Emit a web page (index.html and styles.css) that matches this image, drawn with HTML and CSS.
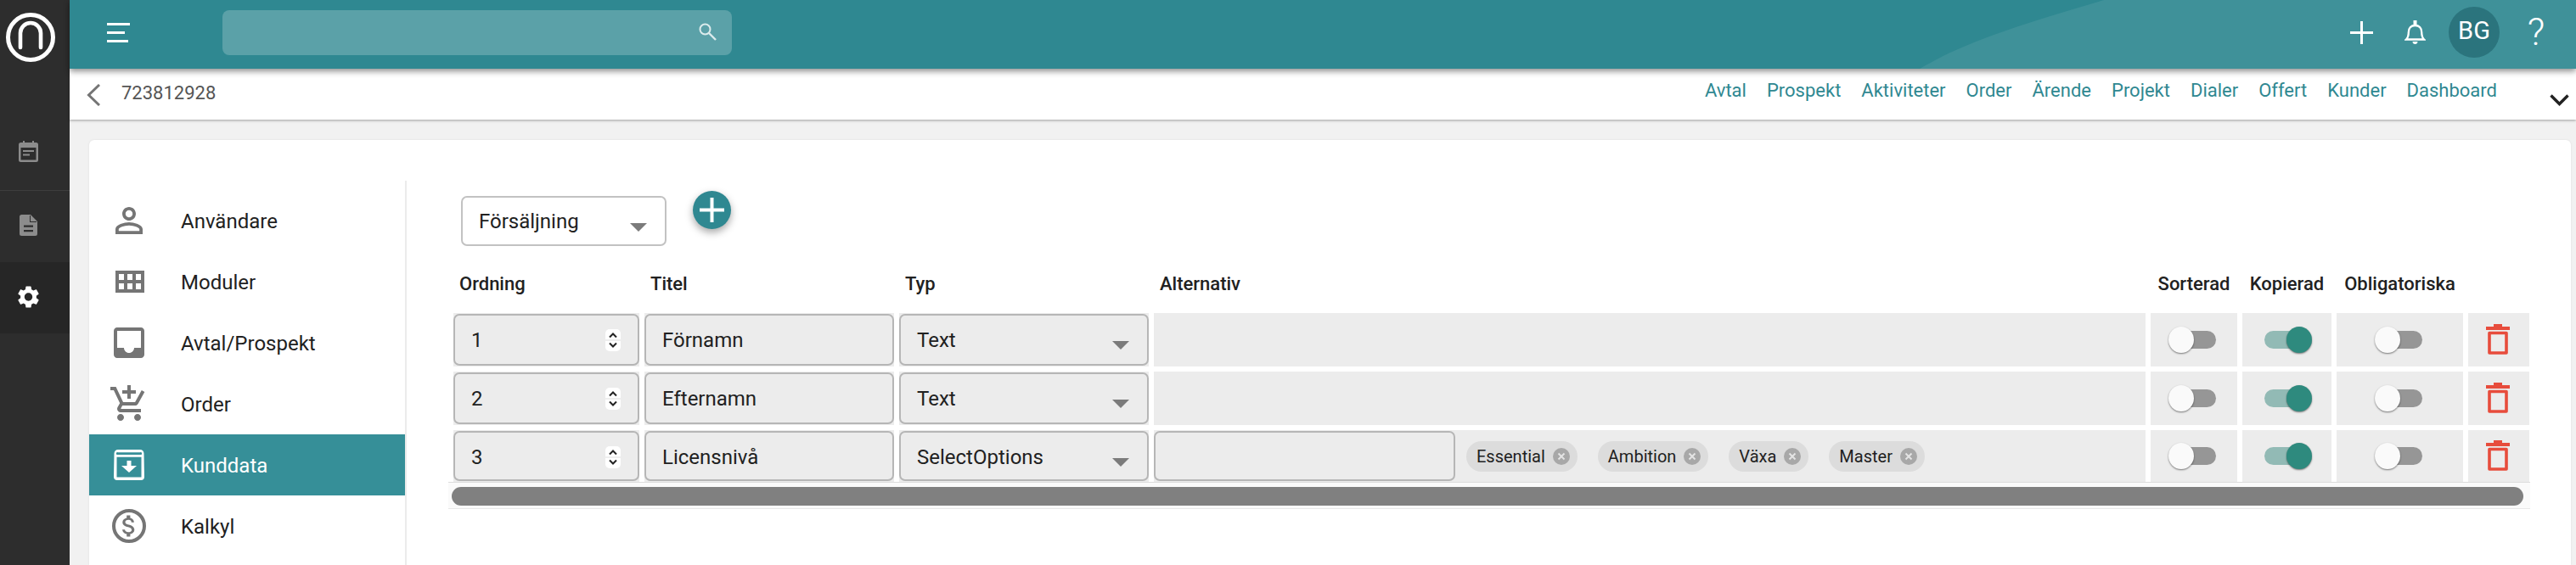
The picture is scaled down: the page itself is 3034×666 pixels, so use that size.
FILE: index.html
```html
<!DOCTYPE html>
<html lang="sv">
<head>
<meta charset="utf-8">
<title>Kunddata</title>
<link rel="stylesheet" href="styles.css">
</head>
<body>
<aside class="rail">
  <div class="rail-logo">
    <svg class="logo" viewBox="0 0 58 58"><circle cx="29" cy="29" r="26.5" fill="none" stroke="#fff" stroke-width="5"/><path d="M17 41V24a12 12 0 0 1 24 0v17" fill="none" stroke="#fff" stroke-width="4.6" stroke-linecap="round"/></svg>
  </div>
  <div class="rail-item rail-line">
    <svg class="rail-cal" viewBox="0 0 23 25"><path fill="#8c8c8c" fill-rule="evenodd" d="M5 0h2v2h9V0h2v2h2.500A2.500 2.500 0 0 1 23 4.500v18a2.500 2.500 0 0 1-2.500 2.500h-18A2.500 2.500 0 0 1 0 22.500v-18A2.500 2.500 0 0 1 2.500 2H5zM2.500 8v14.500h18V8zM5 11h13v2H5zm0 4.500h8v2H5z"/></svg>
  </div>
  <div class="rail-item">
    <svg class="rail-doc" viewBox="0 0 21 25"><path fill="#8c8c8c" fill-rule="evenodd" d="M2.500 0H13l8 8v14.500a2.500 2.500 0 0 1-2.500 2.500h-16A2.500 2.500 0 0 1 0 22.500v-20A2.500 2.500 0 0 1 2.500 0zM5 12.500v2.200h11v-2.200zM5 18v2.200h11V18z"/><path fill="#2d2d2d" d="M12 1v8h8v-1h-7V1z"/></svg>
  </div>
  <div class="rail-item rail-active">
    <svg class="rail-gear" viewBox="2.400 2 19.200 20"><path fill="#fff" d="M19.140 12.940c.04-.3.06-.61.06-.94 0-.32-.02-.64-.07-.94l2.030-1.580c.18-.14.23-.41.120-.61l-1.920-3.320c-.12-.22-.37-.29-.59-.22l-2.390.96c-.5-.38-1.030-.7-1.620-.94l-.36-2.540c-.04-.24-.24-.41-.48-.41h-3.840c-.24 0-.43.17-.47.41l-.36 2.540c-.59.24-1.130.57-1.620.94l-2.390-.96c-.22-.08-.47 0-.59.22L2.740 8.870c-.12.21-.08.47.12.61l2.030 1.580c-.05.3-.09.63-.09.94s.02.64.07.94l-2.030 1.580c-.18.14-.23.41-.12.61l1.920 3.320c.12.22.37.29.59.22l2.390-.96c.5.38 1.030.7 1.620.94l.36 2.54c.05.24.24.41.48.41h3.840c.24 0 .44-.17.47-.41l.36-2.540c.59-.24 1.130-.56 1.620-.94l2.390.96c.22.08.47 0 .59-.22l1.920-3.320c.12-.22.07-.47-.12-.61l-2.010-1.580zM12 15.600c-1.980 0-3.600-1.620-3.600-3.600s1.620-3.600 3.600-3.600 3.600 1.620 3.600 3.600-1.620 3.600-3.600 3.600z"/></svg>
  </div>
</aside>
<div class="main">
  <header class="topbar">
    <svg class="top-curve" viewBox="0 0 773 81"><path fill="#3f9199" d="M217 0C130 26 55 48 0 81H773V0z"/></svg>
    <svg class="burger" viewBox="0 0 27 23"><path fill="#fff" d="M0 0h27v3H0zM0 10h21v3H0zM0 20h25v3H0z"/></svg>
    <div class="search">
      <svg class="search-icon" viewBox="0 0 21 21"><circle cx="7.500" cy="7.500" r="6" fill="none" stroke="#dcebec" stroke-width="2"/><path d="M12 12l8 8" stroke="#dcebec" stroke-width="2.400"/></svg>
    </div>
    <div class="top-actions">
      <svg class="top-plus" viewBox="0 0 27 27"><path fill="#fff" d="M12 0h3v12h12v3H15v12h-3V15H0v-3h12z"/></svg>
      <svg class="top-bell" viewBox="0 0 25 28"><path fill="none" stroke="#fff" stroke-width="2.300" d="M2 22.500c2-2 2.800-4 2.800-8.500 0-5 3-8 7.700-8s7.700 3 7.700 8c0 4.500.8 6.500 2.800 8.500z"/><path fill="#fff" d="M10.500 0h4v5h-4zM9.500 25h6c0 1.800-1.300 3-3 3s-3-1.200-3-3z"/></svg>
      <div class="avatar">BG</div>
      <div class="help">?</div>
    </div>
  </header>
  <nav class="subbar">
    <svg class="back" viewBox="0 0 16 26"><path d="M15 1L2.500 13 15 25" fill="none" stroke="#757575" stroke-width="3"/></svg>
    <span class="sub-id">723812928</span>
    <div class="sub-links">
      <a>Avtal</a><a>Prospekt</a><a>Aktiviteter</a><a>Order</a><a>Ärende</a><a>Projekt</a><a>Dialer</a><a>Offert</a><a>Kunder</a><a>Dashboard</a>
    </div>
    <svg class="sub-more" viewBox="0 0 23 14"><path d="M1.500 1.500l10 10 10-10" fill="none" stroke="#222" stroke-width="3.400"/></svg>
  </nav>
  <section class="card">
    <ul class="menu">
      <li class="menu-item">
        <span class="menu-icon"><svg class="i-person" viewBox="4 4 16 16"><path fill="#757575" d="M12 5.900c1.160 0 2.100.94 2.100 2.100s-.94 2.100-2.100 2.100S9.900 9.160 9.900 8s.94-2.100 2.100-2.100m0 9c2.970 0 6.100 1.460 6.100 2.100v1.100H5.900V17c0-.64 3.130-2.100 6.100-2.100M12 4C9.790 4 8 5.790 8 8s1.790 4 4 4 4-1.790 4-4-1.790-4-4-4zm0 9c-2.670 0-8 1.340-8 4v3h16v-3c0-2.660-5.330-4-8-4z"/></svg></span>
        Användare
      </li>
      <li class="menu-item">
        <span class="menu-icon"><svg class="i-grid" viewBox="0 0 34 26"><path fill="#757575" fill-rule="evenodd" d="M0 0h34v26H0zM4 4v7h6V4zm10 0v7h6V4zm10 0v7h6V4zM4 15v7h6v-7zm10 0v7h6v-7zm10 0v7h6v-7z"/></svg></span>
        Moduler
      </li>
      <li class="menu-item">
        <span class="menu-icon"><svg class="i-inbox" viewBox="3 3 18 18"><path fill="#757575" d="M19 3H4.990c-1.110 0-1.980.89-1.980 2L3 19c0 1.100.88 2 1.990 2H19c1.100 0 2-.9 2-2V5c0-1.110-.9-2-2-2zm0 12h-4c0 1.660-1.350 3-3 3s-3-1.340-3-3H4.990V5H19v10z"/></svg></span>
        Avtal/Prospekt
      </li>
      <li class="menu-item">
        <span class="menu-icon"><svg class="i-cart" viewBox="1 1 20.500 21"><path fill="#757575" d="M11 9h2V6h3V4h-3V1h-2v3H8v2h3v3zm-4 9c-1.100 0-1.990.9-1.990 2S5.900 22 7 22s2-.9 2-2-.9-2-2-2zm10 0c-1.100 0-1.990.9-1.990 2s.89 2 1.990 2 2-.9 2-2-.9-2-2-2zm-9.830-3.250l.03-.12.9-1.630h7.450c.75 0 1.410-.41 1.750-1.030l3.860-7.010L19.420 4h-.01l-1.100 2-2.760 5H8.530l-.13-.27L6.160 6l-.95-2-.94-2H1v2h2l3.600 7.590-1.350 2.450c-.16.28-.25.61-.25.96 0 1.100.9 2 2 2h12v-2H7.420c-.13 0-.25-.11-.25-.25z"/></svg></span>
        Order
      </li>
      <li class="menu-item menu-active">
        <span class="menu-icon"><svg class="i-box" viewBox="0 0 36 36"><path fill="#fff" fill-rule="evenodd" d="M5 0h26a4.500 4.500 0 0 1 4.500 4.500L36 32a4 4 0 0 1-4 4H4a4 4 0 0 1-4-4L.5 4.500A4.500 4.500 0 0 1 5 0zM5 3.200h26a1.500 1.500 0 0 1 1.300 2.800H3.700A1.500 1.500 0 0 1 5 3.200zM3.500 8.800v23.700h29V8.800z"/><path fill="#fff" d="M15.500 13h5v6h6.500l-9 8-9-8h6.500z"/></svg></span>
        Kunddata
      </li>
      <li class="menu-item">
        <span class="menu-icon"><svg class="i-money" viewBox="0 0 40 40"><circle cx="20" cy="20" r="18" fill="none" stroke="#757575" stroke-width="4"/><path fill="#757575" transform="translate(3.200 3.200) scale(1.400)" d="M11.800 10.900c-2.270-.59-3-1.200-3-2.150 0-1.090 1.010-1.850 2.700-1.850 1.780 0 2.440.85 2.500 2.100h2.210c-.07-1.720-1.120-3.300-3.210-3.810V3h-3v2.160c-1.940.42-3.500 1.680-3.500 3.610 0 2.310 1.910 3.460 4.700 4.130 2.500.6 3 1.480 3 2.410 0 .69-.49 1.790-2.700 1.790-2.060 0-2.870-.92-2.980-2.100h-2.200c.12 2.190 1.760 3.420 3.680 3.830V21h3v-2.150c1.950-.37 3.500-1.500 3.500-3.550 0-2.840-2.430-3.810-4.700-4.400z"/></svg></span>
        Kalkyl
      </li>
    </ul>
    <div class="pane">
      <div class="pane-top">
        <div class="select">Försäljning<i class="caret"></i></div>
        <div class="fab"><svg viewBox="0 0 29 29"><path fill="#fff" d="M12.500 0h4v12.500H29v4H16.500V29h-4V16.500H0v-4h12.500z"/></svg></div>
      </div>
      <div class="grid">
        <div class="head">Ordning</div>
        <div class="head">Titel</div>
        <div class="head">Typ</div>
        <div class="head">Alternativ</div>
        <div class="head head-mid">Sorterad</div>
        <div class="head head-mid">Kopierad</div>
        <div class="head head-mid">Obligatoriska</div>
        <div class="head"></div>

        <div class="cell"><div class="field">1<svg class="spin" viewBox="0 0 18 26"><rect width="18" height="26" rx="5" fill="#fff"/><path d="M0 13h18" stroke="#ddd"/><path d="M5 9.500l4-4 4 4M5 16.500l4 4 4-4" fill="none" stroke="#222" stroke-width="2"/></svg></div></div>
        <div class="cell"><div class="field">Förnamn</div></div>
        <div class="cell"><div class="field">Text<i class="caret"></i></div></div>
        <div class="cell"></div>
        <div class="cell cell-off"><div class="toggle"><span class="track"></span><span class="thumb"></span></div></div>
        <div class="cell cell-on"><div class="toggle toggle-on"><span class="track"></span><span class="thumb"></span></div></div>
        <div class="cell cell-off"><div class="toggle"><span class="track"></span><span class="thumb"></span></div></div>
        <div class="cell cell-del"><svg class="trash" viewBox="0 0 28 36"><path fill="#e74c3c" d="M0 3h9V0h10v3h9v4H0z"/><path fill="none" stroke="#e74c3c" stroke-width="3.600" stroke-linejoin="round" d="M4 10.500h20V34H4z"/></svg></div>

        <div class="cell"><div class="field">2<svg class="spin" viewBox="0 0 18 26"><rect width="18" height="26" rx="5" fill="#fff"/><path d="M0 13h18" stroke="#ddd"/><path d="M5 9.500l4-4 4 4M5 16.500l4 4 4-4" fill="none" stroke="#222" stroke-width="2"/></svg></div></div>
        <div class="cell"><div class="field">Efternamn</div></div>
        <div class="cell"><div class="field">Text<i class="caret"></i></div></div>
        <div class="cell"></div>
        <div class="cell cell-off"><div class="toggle"><span class="track"></span><span class="thumb"></span></div></div>
        <div class="cell cell-on"><div class="toggle toggle-on"><span class="track"></span><span class="thumb"></span></div></div>
        <div class="cell cell-off"><div class="toggle"><span class="track"></span><span class="thumb"></span></div></div>
        <div class="cell cell-del"><svg class="trash" viewBox="0 0 28 36"><path fill="#e74c3c" d="M0 3h9V0h10v3h9v4H0z"/><path fill="none" stroke="#e74c3c" stroke-width="3.600" stroke-linejoin="round" d="M4 10.500h20V34H4z"/></svg></div>

        <div class="cell"><div class="field">3<svg class="spin" viewBox="0 0 18 26"><rect width="18" height="26" rx="5" fill="#fff"/><path d="M0 13h18" stroke="#ddd"/><path d="M5 9.500l4-4 4 4M5 16.500l4 4 4-4" fill="none" stroke="#222" stroke-width="2"/></svg></div></div>
        <div class="cell"><div class="field">Licensnivå</div></div>
        <div class="cell"><div class="field">SelectOptions<i class="caret"></i></div></div>
        <div class="cell cell-opts">
          <div class="field field-opt"></div>
          <span class="chip">Essential<svg class="chip-x" viewBox="0 0 20 20"><circle cx="10" cy="10" r="10" fill="#a8a8a8"/><path d="M6.500 6.500l7 7m0-7l-7 7" stroke="#e4e4e4" stroke-width="2"/></svg></span>
          <span class="chip">Ambition<svg class="chip-x" viewBox="0 0 20 20"><circle cx="10" cy="10" r="10" fill="#a8a8a8"/><path d="M6.500 6.500l7 7m0-7l-7 7" stroke="#e4e4e4" stroke-width="2"/></svg></span>
          <span class="chip">Växa<svg class="chip-x" viewBox="0 0 20 20"><circle cx="10" cy="10" r="10" fill="#a8a8a8"/><path d="M6.500 6.500l7 7m0-7l-7 7" stroke="#e4e4e4" stroke-width="2"/></svg></span>
          <span class="chip">Master<svg class="chip-x" viewBox="0 0 20 20"><circle cx="10" cy="10" r="10" fill="#a8a8a8"/><path d="M6.500 6.500l7 7m0-7l-7 7" stroke="#e4e4e4" stroke-width="2"/></svg></span>
        </div>
        <div class="cell cell-off"><div class="toggle"><span class="track"></span><span class="thumb"></span></div></div>
        <div class="cell cell-on"><div class="toggle toggle-on"><span class="track"></span><span class="thumb"></span></div></div>
        <div class="cell cell-off"><div class="toggle"><span class="track"></span><span class="thumb"></span></div></div>
        <div class="cell cell-del"><svg class="trash" viewBox="0 0 28 36"><path fill="#e74c3c" d="M0 3h9V0h10v3h9v4H0z"/><path fill="none" stroke="#e74c3c" stroke-width="3.600" stroke-linejoin="round" d="M4 10.500h20V34H4z"/></svg></div>
      </div>
      <div class="scroll"><div class="scroll-thumb"></div></div>
    </div>
  </section>
</div>
</body>
</html>
```
FILE: styles.css
```css
* { box-sizing: border-box; }
html, body { height: 100%; }
body {
  margin: 0;
  display: flex;
  height: 666px;
  overflow: hidden;
  background: #f1f1f1;
  font-family: Roboto, "Liberation Sans", sans-serif;
  color: #212121;
}

/* Left rail */
.rail { width: 82px; flex: none; background: #2d2d2d; display: flex; flex-direction: column; }
.rail-logo { height: 141px; padding: 15px 0 0 7px; }
.logo { display: block; width: 58px; height: 58px; }
.rail-item { height: 84px; display: flex; align-items: center; justify-content: center; }
.rail-line { border-bottom: 1px solid #3d3d3d; }
.rail-active { background: #262626; }
.rail-cal { width: 23px; height: 25px; margin: -8px 0 0 -15px; }
.rail-doc { width: 21px; height: 25px; margin: -4px 0 0 -15px; }
.rail-gear { width: 25px; height: 26px; margin: -3px 0 0 -15px; }

/* Top bar */
.main { flex: 1; min-width: 0; display: flex; flex-direction: column; }
.topbar {
  position: relative;
  z-index: 2;
  height: 81px;
  flex: none;
  display: flex;
  align-items: center;
  padding: 0 35px 5px 44px;
  background: #2f8891;
  box-shadow: 0 3px 7px rgba(0, 0, 0, .45);
}
.top-curve { position: absolute; right: 0; top: 0; width: 773px; height: 81px; }
.burger { position: relative; width: 27px; height: 23px; flex: none; }
.search {
  position: relative;
  width: 600px;
  height: 53px;
  margin-left: 109px;
  padding-right: 18px;
  display: flex;
  align-items: center;
  justify-content: flex-end;
  border-radius: 8px;
  background: #5ba1a8;
}
.search-icon { width: 21px; height: 21px; margin-top: -2px; }
.top-actions { position: relative; margin-left: auto; display: flex; align-items: center; }
.top-plus { width: 27px; height: 27px; }
.top-bell { width: 25px; height: 28px; margin-left: 37px; }
.avatar {
  width: 60px;
  height: 60px;
  margin-left: 27px;
  border-radius: 50%;
  background: #2b747d;
  color: #fff;
  font-size: 29px;
  line-height: 56px;
  text-align: center;
}
.help { width: 24px; margin-left: 31px; color: #fff; font-size: 45px; font-weight: 300; line-height: 60px; text-align: center; }

/* Sub bar */
.subbar {
  position: relative;
  z-index: 1;
  height: 60px;
  flex: none;
  display: flex;
  align-items: center;
  padding: 0 8px 0 20px;
  background: #fff;
  box-shadow: 0 1px 3px rgba(0, 0, 0, .35);
}
.back { width: 16px; height: 26px; margin-top: 2px; flex: none; }
.sub-id { margin: -4px 0 0 25px; font-size: 22px; color: #555; }
.sub-links { margin-left: auto; margin-top: -9px; display: flex; gap: 24px; font-size: 22px; color: #2f8891; }
.sub-more { width: 23px; height: 14px; margin: 14px 0 0 62px; flex: none; }

/* Card */
.card {
  flex: 1;
  min-height: 0;
  display: flex;
  margin: 24px 6px 0 23px;
  padding-top: 48px;
  background: #fff;
  border-radius: 6px 6px 0 0;
  box-shadow: 0 0 3px rgba(0, 0, 0, .08);
}
.menu {
  width: 374px;
  flex: none;
  margin: 0;
  padding: 11px 0 0;
  list-style: none;
  border-right: 2px solid #ebebeb;
}
.menu-item {
  height: 72px;
  padding-top: 2px;
  display: flex;
  align-items: center;
  font-size: 24px;
  color: #212121;
}
.menu-active { background: #368f98; color: #fff; }
.menu-icon { width: 108px; flex: none; display: flex; justify-content: center; padding-right: 14px; margin-bottom: 2px; }
.i-person { width: 32px; height: 32px; }
.i-grid { width: 34px; height: 26px; margin-left: 2px; }
.i-inbox { width: 36px; height: 36px; }
.i-cart { width: 41px; height: 42px; margin: -2px 4px 0 0; }
.i-box { width: 36px; height: 36px; }
.i-money { width: 40px; height: 40px; }

/* Pane */
.pane { flex: 1; min-width: 0; padding: 18px 0 0 49px; }
.pane-top { display: flex; align-items: flex-start; margin: 0 0 26px 15px; }
.select {
  position: relative;
  width: 242px;
  height: 59px;
  padding: 0 19px;
  border: 2px solid #c2c2c2;
  border-radius: 7px;
  font-size: 24px;
  line-height: 56px;
}
.caret {
  position: absolute;
  right: 21px;
  top: 30px;
  width: 0;
  height: 0;
  border-style: solid;
  border-width: 10px 10px 0;
  border-color: #7b7b7b transparent transparent;
}
.fab {
  width: 45px;
  height: 45px;
  margin: -6px 0 0 31px;
  display: flex;
  align-items: center;
  justify-content: center;
  border-radius: 50%;
  background: #2f8891;
  box-shadow: 0 4px 10px rgba(0, 0, 0, .35);
}
.fab svg { width: 29px; height: 29px; }

/* Grid */
.grid {
  display: grid;
  grid-template-columns: 219px 294px 294px 1168px 102px 105px 149px 72px;
  grid-template-rows: 47px 63px 63px 61px;
  gap: 6px;
  margin-left: 6px;
}
.head { font-size: 22px; font-weight: 500; line-height: 37px; color: #212121; padding-left: 7px; white-space: nowrap; }
.head-mid { padding-left: 0; text-align: center; }
.cell {
  min-width: 0;
  padding: 1px 0;
  background: #ececec;
  display: flex;
  align-items: center;
  justify-content: center;
}
.field {
  position: relative;
  width: 100%;
  height: 100%;
  padding: 0 19px;
  border: 2px solid #b6b6b6;
  border-radius: 7px;
  font-size: 24px;
  line-height: 59px;
  color: #212121;
}
.field .caret { top: 30px; }
.spin { position: absolute; right: 20px; top: 16px; width: 18px; height: 26px; }
.cell-opts { justify-content: flex-start; gap: 24px; }
.field-opt { flex: none; width: 355px; margin-right: -11px; }
.chip {
  height: 36px;
  flex: none;
  display: flex;
  align-items: center;
  gap: 9px;
  padding: 0 9px 0 12px;
  border-radius: 18px;
  background: #dcdcdc;
  font-size: 20px;
  color: #212121;
}
.chip-x { width: 20px; height: 20px; }

/* Toggles */
.cell-off { padding-right: 4px; }
.cell-on { padding-left: 3px; }
.toggle { position: relative; width: 56px; height: 32px; }
.track { position: absolute; left: 6px; right: 0; top: 5px; height: 21px; border-radius: 11px; background: #969696; }
.thumb {
  position: absolute;
  left: 0;
  top: 0;
  width: 30px;
  height: 31px;
  border-radius: 50%;
  background: #fafafa;
  box-shadow: 0 1px 2px rgba(0, 0, 0, .5);
}
.toggle-on .track { left: 0; right: 6px; background: #92bab5; }
.toggle-on .thumb { left: 26px; background: #2e8a7e; }

.cell-del { padding-right: 0; }
.trash { width: 28px; height: 36px; margin: -1px 2px 0 0; }

/* Scrollbar */
.scroll {
  width: 2452px;
  height: 32px;
  margin-top: 0;
  padding: 5px 8px 3px 4px;
  background: #fafafa;
  border-top: 1px solid #dcdcdc;
  border-bottom: 1px solid #e8e8e8;
}
.scroll-thumb { height: 22px; border-radius: 11px; background: #808080; }
```
